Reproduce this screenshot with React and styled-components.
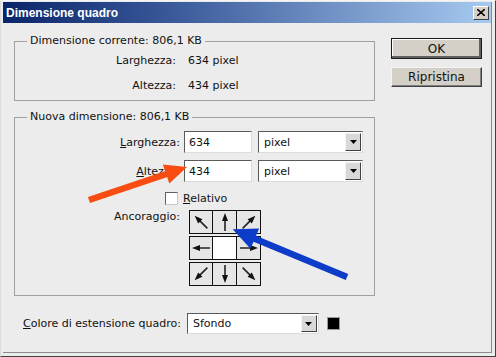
import React from "react";
import styled, { createGlobalStyle } from "styled-components";

const Global = createGlobalStyle`
  html, body { margin: 0; padding: 0; background: #ececec; }
  body {
    font-family: "DejaVu Sans", "Liberation Sans", sans-serif;
    font-size: 11px;
    color: #111;
  }
`;

const Window = styled.div`
  position: relative;
  width: 496px;
  height: 357px;
  box-sizing: border-box;
  background: #ececec;
  border-top: 1px solid #f4f4f4;
  border-left: 1px solid #dcdcdc;
  border-right: 1px solid #404040;
  border-bottom: 1px solid #404040;
  padding: 1px 3px 3px 2px;
  display: flex;
  flex-direction: column;
`;

const Inner = styled.div`
  flex: 1;
  display: flex;
  flex-direction: column;
  border-right: 1px solid #8a8a8a;
  border-bottom: 1px solid #8a8a8a;
`;

const TitleBar = styled.div`
  height: 21px;
  display: flex;
  align-items: center;
  justify-content: space-between;
  padding: 0 2px 0 3px;
  background: linear-gradient(90deg, #0a246a 0%, #3a5a9a 35%, #a6caf0 100%);
  color: #fff;
  font-family: "Liberation Sans", "DejaVu Sans", sans-serif;
  font-weight: bold;
  font-size: 12px;
`;

const CloseBtn = styled.div`
  width: 16px;
  height: 14px;
  box-sizing: border-box;
  background: #d4d0c8;
  border: 1px solid;
  border-color: #fff #404040 #404040 #fff;
  display: flex;
  align-items: center;
  justify-content: center;
`;

const Body = styled.div`
  display: flex;
  padding-left: 11px;
`;

const Main = styled.div`
  width: 361px;
  padding-top: 11px;
`;

const Side = styled.div`
  margin-left: 16px;
  padding-top: 15px;
  display: flex;
  flex-direction: column;
  gap: 8px;
`;

const Frame = styled.fieldset`
  margin: ${(p) => p.$top || 0}px 0 0 0;
  padding: ${(p) => p.$pad};
  border: 1px solid #a0a0a0;
  min-width: 0;
`;

const Legend = styled.legend`
  margin-left: 12px;
  padding: 0 3px;
  line-height: 14px;
`;

const InfoGrid = styled.div`
  display: grid;
  grid-template-columns: 161px auto;
  column-gap: 12px;
  row-gap: 5px;
  grid-auto-rows: 20px;
  align-items: center;
`;

const InfoLabel = styled.div`
  text-align: right;
`;

const FieldRow = styled.div`
  display: flex;
  align-items: center;
  margin-top: ${(p) => p.$mt || 0}px;
`;

const FieldLabel = styled.label`
  width: 165px;
  text-align: right;
  margin-right: 4px;
  flex-shrink: 0;
`;

const U = styled.span`
  text-decoration: underline;
`;

const Input = styled.div`
  width: 68px;
  height: 22px;
  box-sizing: border-box;
  border: 1px solid;
  border-color: #5a5a5a #dcdcdc #dcdcdc #5a5a5a;
  background: #fff;
  padding: 0 4px;
  display: flex;
  align-items: center;
`;

const Select = styled.div`
  width: ${(p) => p.$w}px;
  height: ${(p) => p.$h || 22}px;
  margin-left: ${(p) => p.$ml || 0}px;
  box-sizing: border-box;
  border: 1px solid;
  border-color: #5a5a5a #dcdcdc #dcdcdc #5a5a5a;
  background: #fff;
  display: flex;
  align-items: center;
  padding-left: 5px;
`;

const SelectText = styled.span`
  flex: 1;
`;

const DropBtn = styled.div`
  width: 16px;
  height: calc(100% - 2px);
  margin-right: 1px;
  box-sizing: border-box;
  background: #d8d8d8;
  border: 1px solid;
  border-color: #f4f4f4 #404040 #404040 #f4f4f4;
  display: flex;
  align-items: center;
  justify-content: center;
`;

const CheckRow = styled.div`
  display: flex;
  align-items: center;
  padding-left: 150px;
  margin-top: 10px;
  height: 13px;
`;

const CheckBox = styled.div`
  width: 13px;
  height: 13px;
  box-sizing: border-box;
  border: 1px solid;
  border-color: #606060 #c8c8c8 #c8c8c8 #606060;
  background: #fff;
  margin-right: 5px;
`;

const AnchorRow = styled.div`
  display: flex;
  align-items: flex-start;
  margin-top: 5px;
`;

const AnchorLabel = styled.div`
  width: 165px;
  text-align: right;
  flex-shrink: 0;
`;

const AnchorGrid = styled.div`
  margin-left: 9px;
  display: grid;
  grid-template-columns: repeat(3, 24px);
  grid-template-rows: repeat(3, 24px);
  row-gap: 2px;
`;

const Cell = styled.div`
  box-sizing: border-box;
  border: 1px solid #111;
  margin-left: ${(p) => (p.$first ? 0 : -1)}px;
  width: ${(p) => (p.$first ? 24 : 25)}px;
  background: ${(p) => (p.$center ? "#fff" : "#e6e6e6")};
  display: flex;
  align-items: center;
  justify-content: center;
`;

const BottomRow = styled.div`
  display: flex;
  align-items: center;
  margin-top: 17px;
  padding-left: 9px;
`;

const Swatch = styled.div`
  width: 13px;
  height: 13px;
  margin-left: 8px;
  background: #000;
  border: 1px solid #9a9a9a;
  box-sizing: border-box;
`;

const Button = styled.div`
  width: 91px;
  height: ${(p) => (p.$default ? 21 : 20)}px;
  box-sizing: border-box;
  background: #d4d0c8;
  border: 1px solid;
  border-color: ${(p) => (p.$default ? "#1a1a1a" : "#f4f4f4 #404040 #404040 #f4f4f4")};
  box-shadow: ${(p) =>
    p.$default ? "inset -2px -2px 0 #606060, inset 1px 1px 0 #fff" : "inset -1px -1px 0 #808080"};
  display: flex;
  align-items: center;
  justify-content: center;
  font-size: 12px;
`;

const Overlay = styled.svg`
  position: absolute;
  left: 0;
  top: 0;
  pointer-events: none;
`;

const Arrow = ({ rot }) => (
  <svg width="22" height="22" viewBox="0 0 22 22" style={{ transform: `rotate(${rot}deg)` }}>
    <line x1="11" y1="20" x2="11" y2="8" stroke="#222" strokeWidth="1.6" />
    <polygon points="11,2 8,10 14,10" fill="#111" />
  </svg>
);

const Caret = () => (
  <svg width="7" height="4" viewBox="0 0 7 4">
    <polygon points="0,0 7,0 3.5,4" fill="#000" />
  </svg>
);

const anchors = [-45, 0, 45, -90, null, 90, -135, 180, 135];

export default function App() {
  return (
    <>
      <Global />
      <Window>
        <Inner>
          <TitleBar>
            <span>Dimensione quadro</span>
            <CloseBtn>
              <svg width="8" height="7" viewBox="0 0 8 7">
                <path d="M0 0 L8 7 M8 0 L0 7" stroke="#000" strokeWidth="1.6" />
              </svg>
            </CloseBtn>
          </TitleBar>
          <Body>
            <Main>
              <Frame $pad="2px 0 5px 0">
                <Legend>Dimensione corrente: 806,1 KB</Legend>
                <InfoGrid>
                  <InfoLabel>Larghezza:</InfoLabel>
                  <div>634 pixel</div>
                  <InfoLabel>Altezza:</InfoLabel>
                  <div>434 pixel</div>
                </InfoGrid>
              </Frame>
              <Frame $top={9} $pad="7px 0 9px 0">
                <Legend>Nuova dimensione: 806,1 KB</Legend>
                <FieldRow>
                  <FieldLabel><U>L</U>arghezza:</FieldLabel>
                  <Input>634</Input>
                  <Select $w={105} $ml={6}>
                    <SelectText>pixel</SelectText>
                    <DropBtn><Caret /></DropBtn>
                  </Select>
                </FieldRow>
                <FieldRow $mt={7}>
                  <FieldLabel><U>A</U>ltezza:</FieldLabel>
                  <Input>434</Input>
                  <Select $w={105} $ml={6}>
                    <SelectText>pixel</SelectText>
                    <DropBtn><Caret /></DropBtn>
                  </Select>
                </FieldRow>
                <CheckRow>
                  <CheckBox />
                  <span><U>R</U>elativo</span>
                </CheckRow>
                <AnchorRow>
                  <AnchorLabel>Ancoraggio:</AnchorLabel>
                  <AnchorGrid>
                    {anchors.map((r, i) => (
                      <Cell key={i} $first={i % 3 === 0} $center={r === null}>
                        {r !== null && <Arrow rot={r} />}
                      </Cell>
                    ))}
                  </AnchorGrid>
                </AnchorRow>
              </Frame>
              <BottomRow>
                <span><U>C</U>olore di estensione quadro:</span>
                <Select $w={132} $h={21} $ml={6}>
                  <SelectText>Sfondo</SelectText>
                  <DropBtn><Caret /></DropBtn>
                </Select>
                <Swatch />
              </BottomRow>
            </Main>
            <Side>
              <Button $default>OK</Button>
              <Button>Ripristina</Button>
            </Side>
          </Body>
        </Inner>
        <Overlay width="496" height="357">
          <line x1="88" y1="199" x2="167" y2="172.5" stroke="#f84c12" strokeWidth="6.5" />
          <polygon points="186,166 168.3,182.5 161.9,163.5" fill="#f84c12" />
          <line x1="346" y1="276" x2="252" y2="237" stroke="#0c3cc8" strokeWidth="6.5" />
          <polygon points="231.7,228.3 258.1,227.6 249.5,247.8" fill="#0c3cc8" />
        </Overlay>
      </Window>
    </>
  );
}
